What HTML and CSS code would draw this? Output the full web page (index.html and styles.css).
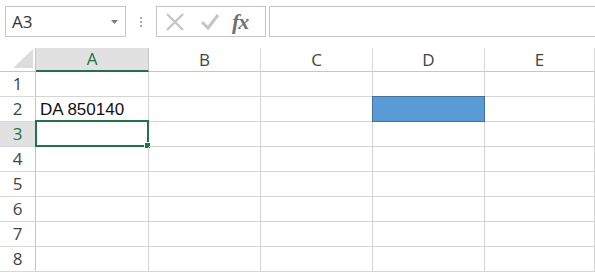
FILE: index.html
```html
<!DOCTYPE html>
<html>
<head>
<meta charset="utf-8">
<link rel="stylesheet" href="styles.css">
</head>
<body>
<div class="toolbar">
  <div class="namebox">
    <span class="name">A3</span>
    <svg class="caret" width="8" height="5" viewBox="0 0 8 5"><path d="M0 0H7L3.5 4Z" fill="#7a7a7a"/></svg>
  </div>
  <div class="grip"><span></span><span></span><span></span></div>
  <div class="fxbox">
    <svg class="ico" width="20" height="20" viewBox="0 0 20 20"><path d="M2 2L18 18M18 2L2 18" stroke="#c4c4c4" stroke-width="2.4" fill="none"/></svg>
    <svg class="ico" width="20" height="20" viewBox="0 0 20 20"><path d="M2 10L8 16L18 3" stroke="#c4c4c4" stroke-width="3" fill="none"/></svg>
    <span class="fx">fx</span>
  </div>
  <div class="formula"></div>
</div>
<div class="sheet">
  <div class="corner"><svg width="20" height="19" viewBox="0 0 20 19"><path d="M0 19H20V0Z" fill="#dcdcdc"/></svg></div>
  <div class="ch active">A</div><div class="ch">B</div><div class="ch">C</div><div class="ch">D</div><div class="ch">E</div>

  <div class="rh">1</div><div class="c"></div><div class="c"></div><div class="c"></div><div class="c"></div><div class="c"></div>
  <div class="rh">2</div><div class="c txt">DA 850140</div><div class="c"></div><div class="c"></div><div class="c"><div class="fill"></div></div><div class="c"></div>
  <div class="rh active">3</div><div class="c"><div class="sel"><span class="handle"></span></div></div><div class="c"></div><div class="c"></div><div class="c"></div><div class="c"></div>
  <div class="rh">4</div><div class="c"></div><div class="c"></div><div class="c"></div><div class="c"></div><div class="c"></div>
  <div class="rh">5</div><div class="c"></div><div class="c"></div><div class="c"></div><div class="c"></div><div class="c"></div>
  <div class="rh">6</div><div class="c"></div><div class="c"></div><div class="c"></div><div class="c"></div><div class="c"></div>
  <div class="rh">7</div><div class="c"></div><div class="c"></div><div class="c"></div><div class="c"></div><div class="c"></div>
  <div class="rh">8</div><div class="c"></div><div class="c"></div><div class="c"></div><div class="c"></div><div class="c"></div>
</div>
</body>
</html>
```
FILE: styles.css
```css
html, body { margin: 0; padding: 0; background: #fff; overflow: hidden; }
body { width: 595px; height: 273px; font-family: "Open Sans", "Noto Sans", sans-serif; }

.toolbar {
  height: 48px;
  box-sizing: border-box;
  padding: 6px 0 0 5px;
  display: flex;
  align-items: flex-start;
}
.namebox {
  width: 121px; height: 31px; box-sizing: border-box;
  border: 1px solid #c6c6c6;
  display: flex; align-items: center; justify-content: space-between;
  padding: 0 6px 0 6px;
}
.name { font-size: 17px; color: #333; line-height: 1; }
.caret { margin-top: 1px; }
.grip {
  width: 30px; height: 31px;
  display: flex; flex-direction: column; align-items: center; justify-content: center; gap: 2px;
}
.grip span { width: 2px; height: 2px; background: #a8a8a8; }
.fxbox {
  width: 110px; height: 31px; box-sizing: border-box;
  border: 1px solid #c6c6c6;
  display: flex; align-items: center;
  padding-left: 8px; gap: 15px;
}
.fxbox .ico { flex: none; }
.fx {
  font-family: "Liberation Serif", serif; font-style: italic; font-weight: bold;
  font-size: 22px; color: #707070; line-height: 1; margin-left: -3px; letter-spacing: -1px;
}
.formula {
  flex: 1; height: 31px; box-sizing: border-box; margin-left: 3px;
  border: 1px solid #c6c6c6; border-right: none;
}

.sheet {
  display: grid;
  grid-template-columns: 36px 113px 112px 112px 112px 1fr;
  grid-template-rows: 24px repeat(8, 25px);
}
.sheet > div { box-sizing: border-box; }
.corner {
  border-right: 1px solid #c6c6c6; border-bottom: 1px solid #c6c6c6;
  display: flex; align-items: flex-end; justify-content: flex-end; padding: 0 2px 3px 0;
}
.ch {
  border-right: 1px solid #d8d8d8; border-bottom: 1px solid #c6c6c6;
  display: flex; align-items: center; justify-content: center;
  font-size: 17px; color: #444; padding-bottom: 1px;
}
.ch.active { background: #e1e1e1; color: #217346; border-bottom: 2px solid #217346; border-right-color: #c6c6c6; }
.rh {
  border-right: 1px solid #c6c6c6; border-bottom: 1px solid #d8d8d8;
  display: flex; align-items: center; justify-content: center;
  font-size: 17px; color: #444; padding-bottom: 1px;
}
.rh.active { background: #e1e1e1; color: #217346; }
.c {
  border-right: 1px solid #d4d4d4; border-bottom: 1px solid #d4d4d4;
  position: relative;
}
.txt {
  font-family: "Liberation Sans", Arial, sans-serif; font-size: 17px; color: #111;
  padding-left: 4px; display: flex; align-items: center; padding-top: 1px;
}
.fill {
  position: absolute; top: -1px; left: -1px; right: -1px; bottom: -1px;
  background: #5b9bd5; border: 1px solid #41719c;
}
.sel {
  position: absolute; top: -2px; left: -1px; right: -1px; bottom: -1px;
  border: 2px solid #217346;
}
.handle {
  position: absolute; right: -4px; bottom: -4px;
  width: 5px; height: 5px; background: #217346; border: 1px solid #fff;
}
```
